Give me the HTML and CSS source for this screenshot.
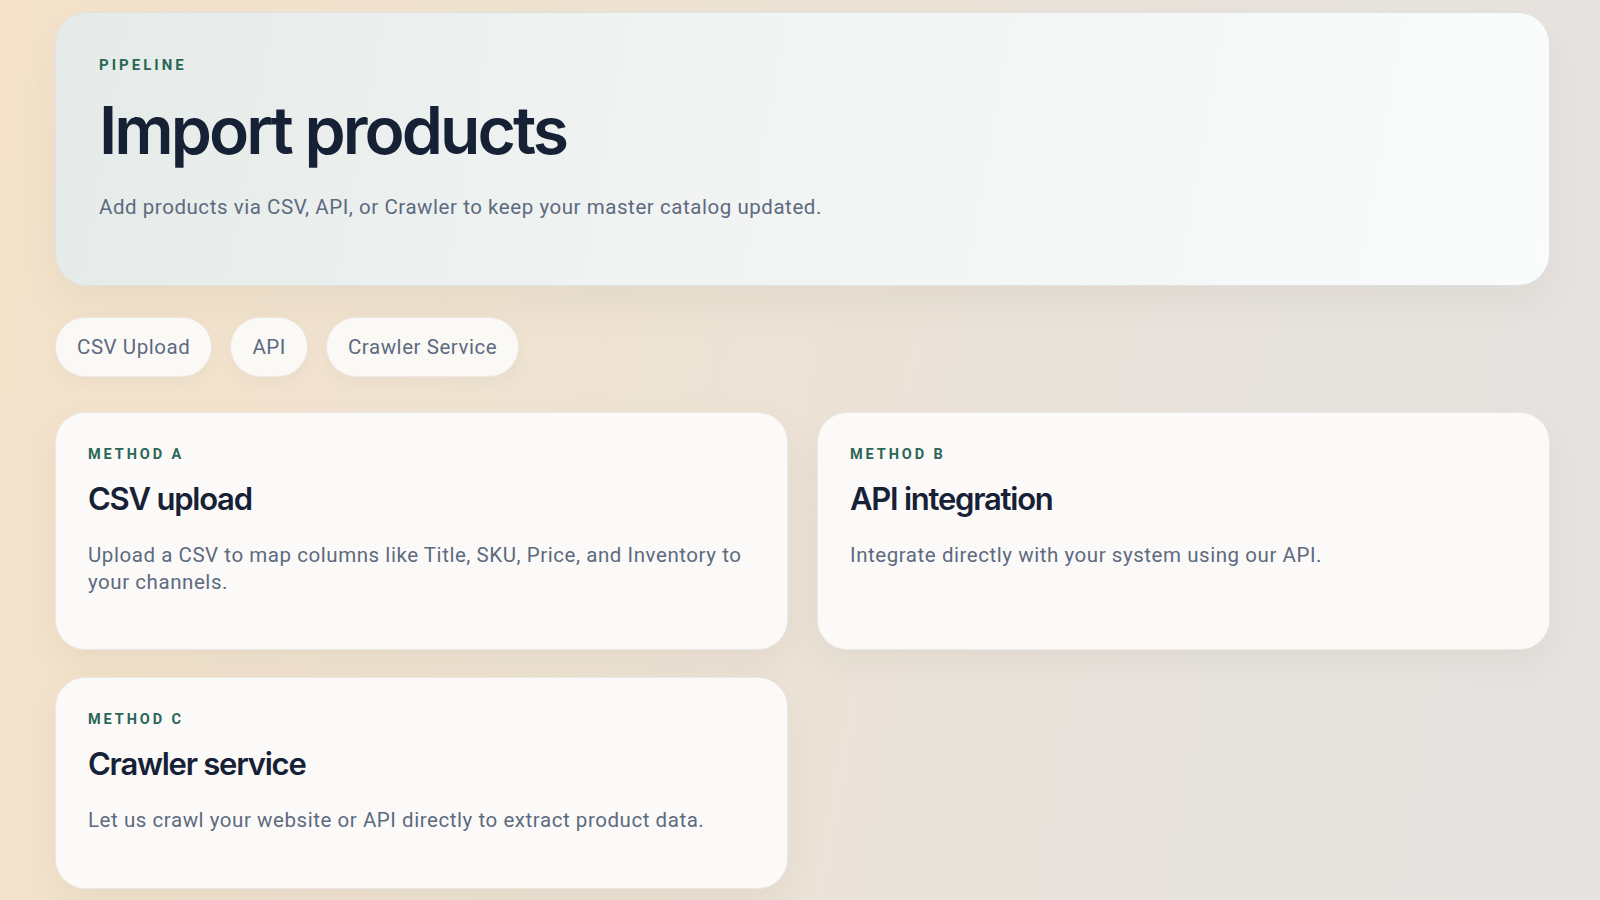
FILE: index.html
```html
<!DOCTYPE html>
<html lang="en">
<head>
  <meta charset="UTF-8">
  <meta name="viewport" content="width=device-width, initial-scale=1.0">
  <title>Import products</title>
  <link rel="stylesheet" href="styles.css">
</head>
<body>
  <div class="page">
    <div class="hero">
      <div class="eyebrow">Pipeline</div>
      <h1>Import products</h1>
      <p class="lead">Add products via CSV, API, or Crawler to keep your master catalog updated.</p>
    </div>

    <div class="tabs">
      <button class="pill">CSV Upload</button>
      <button class="pill">API</button>
      <button class="pill">Crawler Service</button>
    </div>

    <div class="methods">
      <div class="card">
        <div class="eyebrow">Method A</div>
        <h2>CSV upload</h2>
        <p>Upload a CSV to map columns like Title, SKU, Price, and Inventory to your channels.</p>
      </div>
      <div class="card">
        <div class="eyebrow">Method B</div>
        <h2>API integration</h2>
        <p>Integrate directly with your system using our API.</p>
      </div>
      <div class="card">
        <div class="eyebrow">Method C</div>
        <h2>Crawler service</h2>
        <p>Let us crawl your website or API directly to extract product data.</p>
      </div>
    </div>
  </div>
</body>
</html>
```

FILE: styles.css
```css
body {
  margin: 0;
  min-height: 100vh;
  font-family: Roboto, "Noto Sans", sans-serif;
  color: #5d6a80;
  background: linear-gradient(100deg, #f5e3ca 0%, #eee3d4 40%, #e8e3de 75%, #e6e3e0 100%);
}

.page {
  padding: 12px 50px 40px 55px;
}

.hero {
  padding: 42px 43px 64px;
  border-radius: 32px;
  border: 1px solid #dbe3e4;
  background: linear-gradient(100deg, #e5ebe8 0%, #f1f4f3 45%, #fafbfb 100%);
  box-shadow: 0 18px 40px rgba(120, 100, 80, 0.08);
}

.eyebrow {
  font-size: 15px;
  line-height: 20px;
  font-weight: 700;
  letter-spacing: 0.2em;
  text-transform: uppercase;
  color: #2b6656;
}

h1 {
  margin: 17px 0 0;
  font-family: Inter, sans-serif;
  font-size: 66px;
  line-height: 76px;
  font-weight: 600;
  letter-spacing: -0.045em;
  color: #172136;
}

.lead {
  margin: 25px 0 0;
  font-size: 20.5px;
  line-height: 28px;
  letter-spacing: 0.027em;
}

.tabs {
  display: flex;
  gap: 18px;
  margin: 31px 0 35px;
}

.pill {
  font-family: inherit;
  font-size: 20.5px;
  line-height: 26px;
  letter-spacing: 0.027em;
  color: #5d6a80;
  padding: 16px 21px;
  border-radius: 999px;
  border: 1px solid #ece8e2;
  background: #fbf9f6;
  box-shadow: 0 6px 16px rgba(120, 100, 80, 0.06);
  cursor: pointer;
}

.methods {
  display: grid;
  grid-template-columns: 1fr 1fr;
  gap: 27px 29px;
}

.card {
  padding: 32px 32px 54px;
  border-radius: 30px;
  border: 1px solid #ebe7e2;
  background: #fbfaf8;
  box-shadow: 0 14px 34px rgba(120, 100, 80, 0.08);
}

.card .eyebrow {
  font-size: 14.5px;
  letter-spacing: 0.2em;
}

h2 {
  margin: 16px 0 0;
  font-family: Inter, sans-serif;
  font-size: 31px;
  line-height: 36px;
  font-weight: 600;
  letter-spacing: -0.04em;
  color: #172136;
}

.card p {
  margin: 25px 0 0;
  font-size: 20.5px;
  line-height: 26.5px;
  letter-spacing: 0.027em;
}
```
